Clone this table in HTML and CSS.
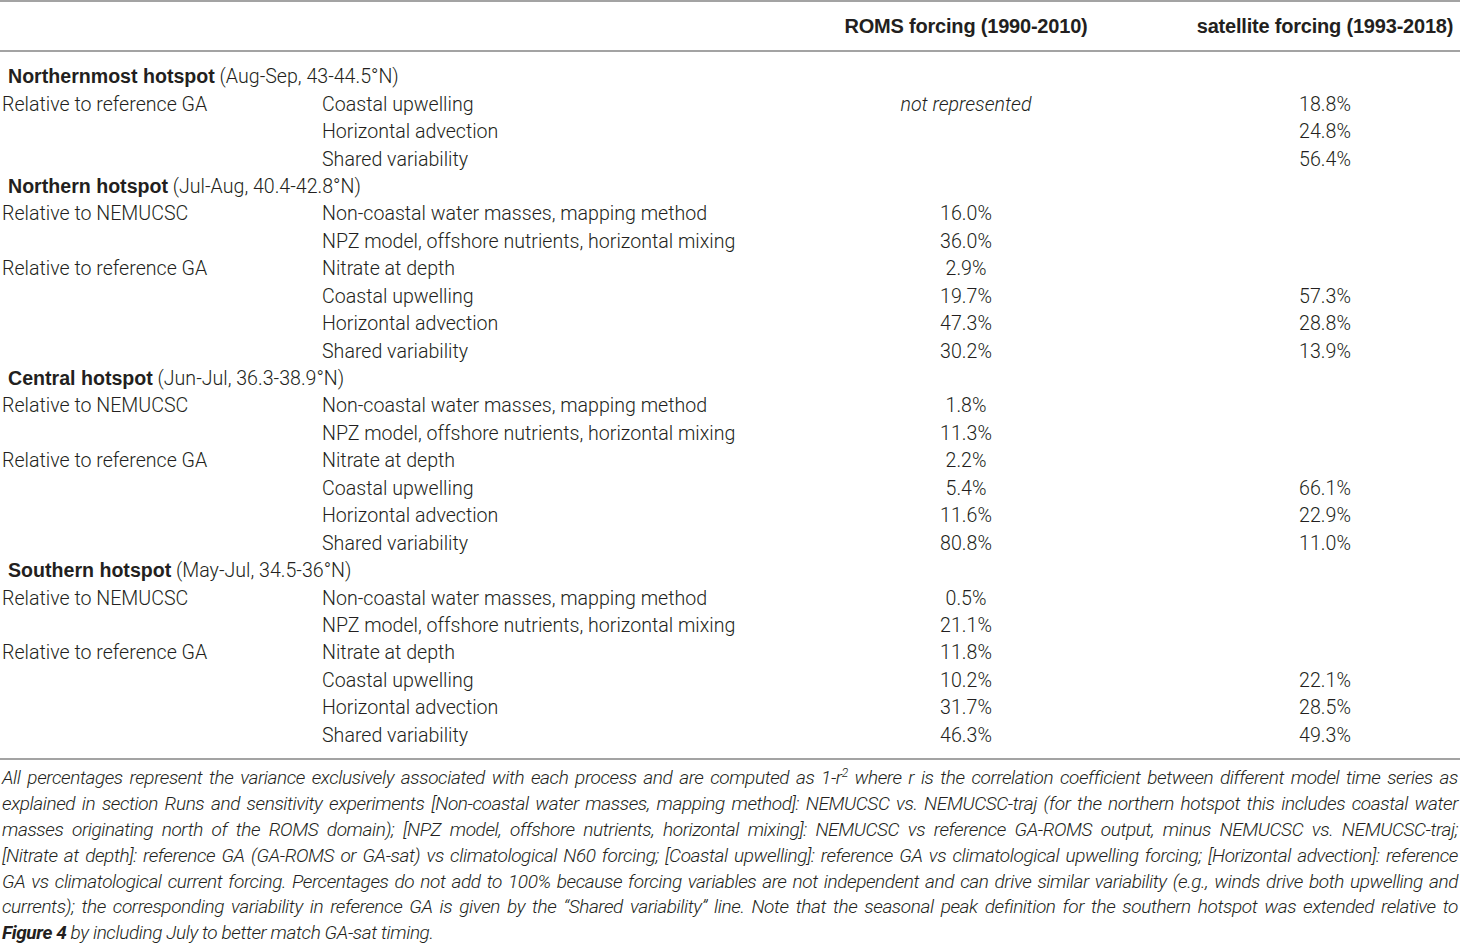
FILE: index.html
```html
<!DOCTYPE html>
<html lang="en">
<head>
  <meta charset="UTF-8">
  <title>Variance table</title>
  <link rel="stylesheet" href="styles.css">
</head>
<body>
  <div class="tabela">
    <div class="linha cabecalho">
      <div></div>
      <div></div>
      <div class="num">ROMS forcing (1990-2010)</div>
      <div class="num">satellite forcing (1993-2018)</div>
    </div>

    <div class="corpo">
      <div class="linha secao"><div><strong>Northernmost hotspot</strong> (Aug-Sep, 43-44.5°N)</div></div>
      <div class="linha"><div>Relative to reference GA</div><div>Coastal upwelling</div><div class="num"><em>not represented</em></div><div class="num">18.8%</div></div>
      <div class="linha"><div></div><div>Horizontal advection</div><div class="num"></div><div class="num">24.8%</div></div>
      <div class="linha"><div></div><div>Shared variability</div><div class="num"></div><div class="num">56.4%</div></div>

      <div class="linha secao"><div><strong>Northern hotspot</strong> (Jul-Aug, 40.4-42.8°N)</div></div>
      <div class="linha"><div>Relative to NEMUCSC</div><div>Non-coastal water masses, mapping method</div><div class="num">16.0%</div><div class="num"></div></div>
      <div class="linha"><div></div><div>NPZ model, offshore nutrients, horizontal mixing</div><div class="num">36.0%</div><div class="num"></div></div>
      <div class="linha"><div>Relative to reference GA</div><div>Nitrate at depth</div><div class="num">2.9%</div><div class="num"></div></div>
      <div class="linha"><div></div><div>Coastal upwelling</div><div class="num">19.7%</div><div class="num">57.3%</div></div>
      <div class="linha"><div></div><div>Horizontal advection</div><div class="num">47.3%</div><div class="num">28.8%</div></div>
      <div class="linha"><div></div><div>Shared variability</div><div class="num">30.2%</div><div class="num">13.9%</div></div>

      <div class="linha secao"><div><strong>Central hotspot</strong> (Jun-Jul, 36.3-38.9°N)</div></div>
      <div class="linha"><div>Relative to NEMUCSC</div><div>Non-coastal water masses, mapping method</div><div class="num">1.8%</div><div class="num"></div></div>
      <div class="linha"><div></div><div>NPZ model, offshore nutrients, horizontal mixing</div><div class="num">11.3%</div><div class="num"></div></div>
      <div class="linha"><div>Relative to reference GA</div><div>Nitrate at depth</div><div class="num">2.2%</div><div class="num"></div></div>
      <div class="linha"><div></div><div>Coastal upwelling</div><div class="num">5.4%</div><div class="num">66.1%</div></div>
      <div class="linha"><div></div><div>Horizontal advection</div><div class="num">11.6%</div><div class="num">22.9%</div></div>
      <div class="linha"><div></div><div>Shared variability</div><div class="num">80.8%</div><div class="num">11.0%</div></div>

      <div class="linha secao"><div><strong>Southern hotspot</strong> (May-Jul, 34.5-36°N)</div></div>
      <div class="linha"><div>Relative to NEMUCSC</div><div>Non-coastal water masses, mapping method</div><div class="num">0.5%</div><div class="num"></div></div>
      <div class="linha"><div></div><div>NPZ model, offshore nutrients, horizontal mixing</div><div class="num">21.1%</div><div class="num"></div></div>
      <div class="linha"><div>Relative to reference GA</div><div>Nitrate at depth</div><div class="num">11.8%</div><div class="num"></div></div>
      <div class="linha"><div></div><div>Coastal upwelling</div><div class="num">10.2%</div><div class="num">22.1%</div></div>
      <div class="linha"><div></div><div>Horizontal advection</div><div class="num">31.7%</div><div class="num">28.5%</div></div>
      <div class="linha"><div></div><div>Shared variability</div><div class="num">46.3%</div><div class="num">49.3%</div></div>
    </div>
  </div>

  <div class="nota">
    <p class="just">All percentages represent the variance exclusively associated with each process and are computed as 1-r<sup>2</sup> where r is the correlation coefficient between different model time series as</p>
    <p class="just">explained in section Runs and sensitivity experiments [Non-coastal water masses, mapping method]: NEMUCSC vs. NEMUCSC-traj (for the northern hotspot this includes coastal water</p>
    <p class="just">masses originating north of the ROMS domain); [NPZ model, offshore nutrients, horizontal mixing]: NEMUCSC vs reference GA-ROMS output, minus NEMUCSC vs. NEMUCSC-traj;</p>
    <p class="just">[Nitrate at depth]: reference GA (GA-ROMS or GA-sat) vs climatological N60 forcing; [Coastal upwelling]: reference GA vs climatological upwelling forcing; [Horizontal advection]: reference</p>
    <p class="just">GA vs climatological current forcing. Percentages do not add to 100% because forcing variables are not independent and can drive similar variability (e.g., winds drive both upwelling and</p>
    <p class="just">currents); the corresponding variability in reference GA is given by the “Shared variability” line. Note that the seasonal peak definition for the southern hotspot was extended relative to</p>
    <p><strong>Figure 4</strong> by including July to better match GA-sat timing.</p>
  </div>
</body>
</html>
```

FILE: styles.css
```css
body {
  margin: 0;
  font-family: Roboto, "Liberation Sans", sans-serif;
  font-weight: 300;
  background-color: #fff;
  color: #231f20;
}

.tabela {
  border-top: 2px solid #a3a3a3;
  border-bottom: 2px solid #a3a3a3;
}

.linha {
  display: grid;
  grid-template-columns: 320px 418px 452px 266px;
  padding-left: 2px;
  height: 27.45px;
  align-items: center;
  font-size: 19.6px;
  white-space: nowrap;
}

.linha .num {
  text-align: center;
}

.cabecalho {
  height: 48px;
  border-bottom: 2px solid #a3a3a3;
  font-family: "Liberation Sans", sans-serif;
  font-weight: bold;
  font-size: 20px;
  letter-spacing: -0.2px;
}

.corpo {
  padding: 11px 0 9px;
}

.secao {
  padding-left: 8px;
}

.secao strong {
  font-family: "Liberation Sans", sans-serif;
  font-weight: 700;
}

.nota {
  padding: 5px 2px 0;
  font-style: italic;
  font-size: 19px;
  letter-spacing: -0.4px;
  line-height: 25.9px;
}

.nota p {
  margin: 0;
  white-space: nowrap;
}

.nota .just {
  text-align: justify;
  text-align-last: justify;
  white-space: normal;
}

.nota sup {
  font-size: 12px;
  line-height: 0;
}

.nota strong {
  font-weight: bold;
}
```
